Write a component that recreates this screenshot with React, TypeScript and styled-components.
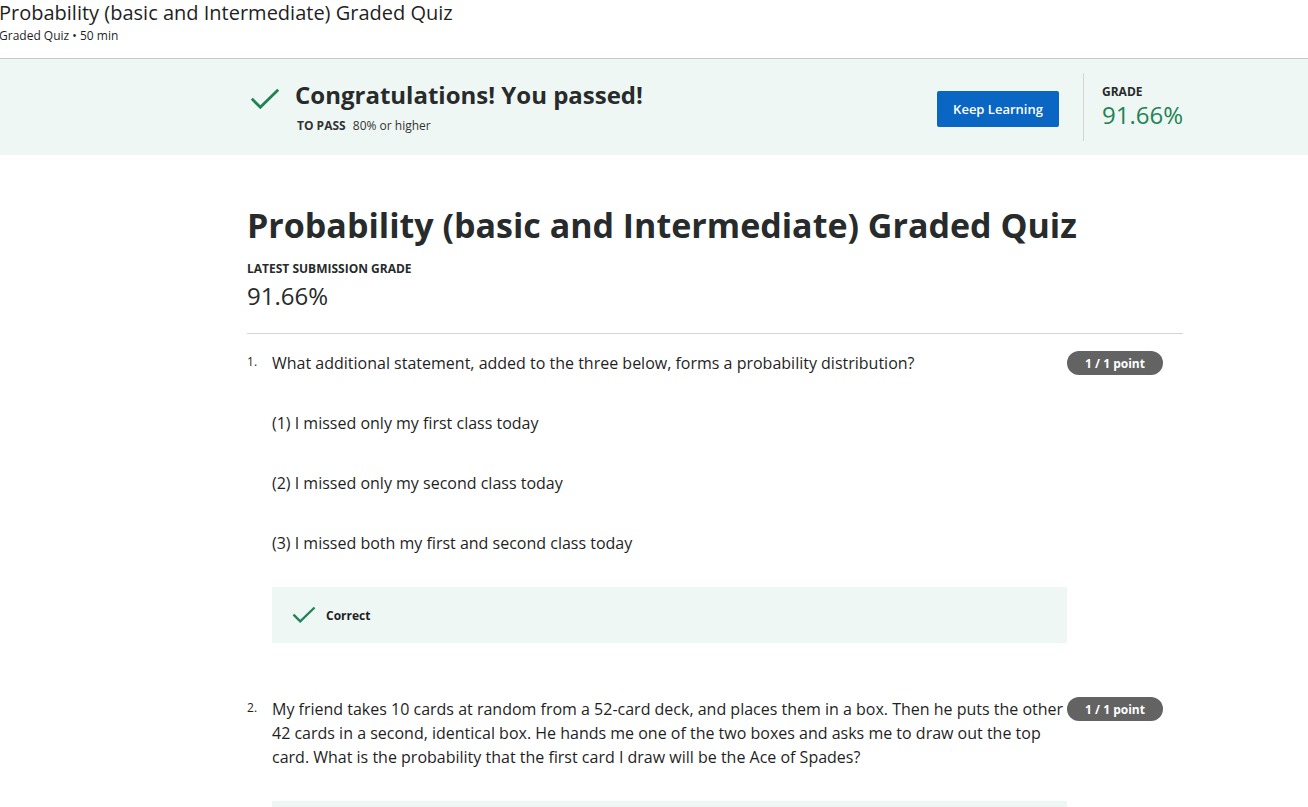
import React from 'react';
import styled, { createGlobalStyle } from 'styled-components';

const GlobalStyle = createGlobalStyle`
  body {
    margin: 0;
    background: #fff;
    font-family: "Open Sans", "Noto Sans", sans-serif;
    color: #1f1f1f;
  }
`;

const Check = ({ size = 30 }: { size?: number }) => (
  <svg width={size} height={size * 0.75} viewBox="0 0 32 24" fill="none">
    <path d="M3 12.5 L11 20.5 L29 3" stroke="#1f8354" strokeWidth="3" strokeLinecap="square" />
  </svg>
);

const questions = [
  {
    n: 1,
    text: 'What additional statement, added to the three below, forms a probability distribution?',
    options: [
      '(1) I missed only my first class today',
      '(2) I missed only my second class today',
      '(3) I missed both my first and second class today',
    ],
  },
  {
    n: 2,
    text: 'My friend takes 10 cards at random from a 52-card deck, and places them in a box. Then he puts the other 42 cards in a second, identical box. He hands me one of the two boxes and asks me to draw out the top card. What is the probability that the first card I draw will be the Ace of Spades?',
    options: [],
  },
];

const App = () => {
  return (
    <Page>
      <GlobalStyle />
      <TopHeader>
        <HeaderTitle>Probability (basic and Intermediate) Graded Quiz</HeaderTitle>
        <HeaderMeta>Graded Quiz • 50 min</HeaderMeta>
      </TopHeader>
      <Banner>
        <BannerInner>
          <BannerCheck>
            <Check size={30} />
          </BannerCheck>
          <BannerText>
            <Congrats>Congratulations! You passed!</Congrats>
            <PassLine>
              <strong>TO PASS</strong> 80% or higher
            </PassLine>
          </BannerText>
          <KeepButton>Keep Learning</KeepButton>
          <GradeBlock>
            <SmallLabel>GRADE</SmallLabel>
            <GradeValue>91.66%</GradeValue>
          </GradeBlock>
        </BannerInner>
      </Banner>
      <Main>
        <QuizTitle>Probability (basic and Intermediate) Graded Quiz</QuizTitle>
        <SmallLabel>LATEST SUBMISSION GRADE</SmallLabel>
        <LatestGrade>91.66%</LatestGrade>
        <Divider />
        {questions.map((q) => (
          <Question key={q.n}>
            <QuestionHead>
              <QNum>{q.n}.</QNum>
              <QText>{q.text}</QText>
              <PointBadge>1 / 1 point</PointBadge>
            </QuestionHead>
            {q.options.map((o) => (
              <Option key={o}>{o}</Option>
            ))}
            <Feedback>
              <Check size={24} />
              <FeedbackText>Correct</FeedbackText>
            </Feedback>
          </Question>
        ))}
      </Main>
    </Page>
  );
};

const Page = styled.div`
  width: 1308px;
  height: 807px;
  overflow: hidden;
`;

const TopHeader = styled.header`
  height: 58px;
  border-bottom: 1px solid #c8c8c8;
  margin-left: -1px;
`;

const HeaderTitle = styled.div`
  font-size: 20px;
  line-height: 26px;
  color: #1f1f1f;
`;

const HeaderMeta = styled.div`
  font-size: 12px;
  line-height: 17px;
  color: #1f1f1f;
  margin-top: 1px;
`;

const Banner = styled.section`
  background: #eff7f4;
  height: 96px;
`;

const BannerInner = styled.div`
  width: 936px;
  margin-left: 247px;
  display: flex;
  align-items: center;
  height: 100%;
`;

const BannerCheck = styled.div`
  width: 48px;
  display: flex;
  align-self: flex-start;
  margin-top: 29px;
  padding-left: 3px;
  box-sizing: border-box;
`;

const BannerText = styled.div`
  flex: 1;
  display: flex;
  flex-direction: column;
`;

const Congrats = styled.h2`
  margin: 0;
  font-size: 24px;
  font-weight: 700;
  line-height: 32px;
  color: #272b2b;
`;

const PassLine = styled.div`
  font-size: 12px;
  line-height: 18px;
  margin-top: 6px;
  margin-left: 2px;
  color: #333;
  strong {
    font-weight: 700;
    margin-right: 4px;
  }
`;

const KeepButton = styled.button`
  background: #0966c2;
  color: #fff;
  border: none;
  border-radius: 2px;
  height: 36px;
  width: 122px;
  font-family: inherit;
  font-size: 13px;
  font-weight: 600;
  padding: 0;
  margin-right: 24px;
  margin-top: 4px;
`;

const GradeBlock = styled.div`
  border-left: 1px solid #d5d5d5;
  height: 68px;
  padding-left: 18px;
  width: 100px;
  box-sizing: border-box;
  display: flex;
  flex-direction: column;
  justify-content: center;
`;

const SmallLabel = styled.div`
  font-size: 12px;
  font-weight: 700;
  line-height: 16px;
  color: #272b2b;
`;

const GradeValue = styled.div`
  font-size: 24px;
  line-height: 30px;
  color: #1f8354;
`;

const Main = styled.main`
  width: 936px;
  margin-left: 247px;
  padding-top: 44px;
`;

const QuizTitle = styled.h1`
  margin: 0 0 10px;
  font-size: 34px;
  line-height: 52px;
  font-weight: 700;
  color: #272b2b;
`;

const LatestGrade = styled.div`
  font-size: 24px;
  line-height: 32px;
  margin-top: 3px;
  color: #272b2b;
`;

const Divider = styled.hr`
  border: none;
  border-top: 1px solid #d5d5d5;
  margin: 21px 0 0;
`;

const Question = styled.div`
  padding-top: 17px;
  padding-bottom: 37px;
`;

const QuestionHead = styled.div`
  display: flex;
  align-items: flex-start;
`;

const QNum = styled.div`
  width: 25px;
  font-size: 12px;
  line-height: 24px;
  color: #1f1f1f;
  margin-top: -1px;
`;

const QText = styled.div`
  width: 795px;
  font-size: 16px;
  line-height: 24px;
  color: #1f1f1f;
`;

const PointBadge = styled.div`
  width: 96px;
  height: 24px;
  border-radius: 12px;
  background: #636363;
  color: #fff;
  font-size: 12px;
  font-weight: 700;
  display: flex;
  align-items: center;
  justify-content: center;
`;

const Option = styled.div`
  margin-left: 25px;
  margin-top: 36px;
  font-size: 16px;
  line-height: 24px;
  color: #1f1f1f;
`;

const Feedback = styled.div`
  margin-left: 25px;
  margin-top: 32px;
  width: 795px;
  height: 56px;
  background: #eff7f4;
  display: flex;
  align-items: center;
  padding-left: 20px;
  gap: 10px;
  box-sizing: border-box;
`;

const FeedbackText = styled.span`
  font-size: 12px;
  font-weight: 700;
  color: #1f1f1f;
`;

export default App;
